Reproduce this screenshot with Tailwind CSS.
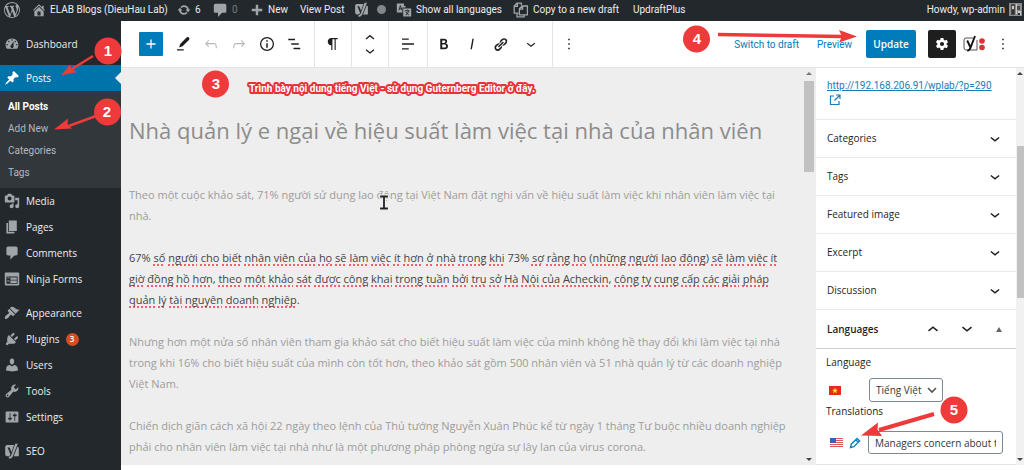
<!DOCTYPE html>
<html lang="vi">
<head>
<meta charset="utf-8">
<meta name="viewport" content="width=device-width, initial-scale=1">
<title>Edit Post</title>
<script src="https://cdn.jsdelivr.net/npm/@tailwindcss/browser@4"></script>
</head>
<body class="relative flex h-screen flex-col overflow-hidden bg-white font-['Open_Sans','Noto_Sans',sans-serif] text-[10px] text-[#1e1e1e]">

<!-- Admin bar -->
<header class="flex h-[21px] shrink-0 items-center bg-[#23282d] pr-0.5 pb-0.5 pl-1 font-[Roboto,sans-serif] text-[10px] leading-4 whitespace-nowrap text-[#eee]">
  <a href="#" aria-label="WordPress" class="w-7 text-[#a0a5aa]"><svg class="size-4" viewBox="0 0 20 20" fill="currentColor"><path d="M20 10c0-5.51-4.49-10-10-10C4.48 0 0 4.49 0 10c0 5.52 4.48 10 10 10 5.51 0 10-4.48 10-10zM7.78 15.37L4.37 6.22c.55-.02 1.17-.08 1.17-.08.5-.06.44-1.13-.06-1.11 0 0-1.45.11-2.37.11-.18 0-.37 0-.58-.01C4.12 2.69 6.87 1.11 10 1.11c2.33 0 4.45.87 6.05 2.34-.68-.11-1.65.39-1.65 1.58 0 .74.45 1.36.9 2.1.35.61.55 1.36.55 2.46 0 1.49-1.4 5-1.4 5l-3.03-8.37c.54-.02.82-.17.82-.17.5-.05.44-1.25-.06-1.22 0 0-1.44.12-2.38.12-.87 0-2.33-.12-2.33-.12-.5-.03-.56 1.2-.06 1.22l.92.08 1.26 3.41zM17.41 10c.24-.64.74-1.87.43-4.25.7 1.29 1.05 2.71 1.05 4.25 0 3.29-1.73 6.24-4.4 7.78.97-2.59 1.94-5.2 2.92-7.78zM6.1 18.09C3.12 16.65 1.11 13.53 1.11 10c0-1.3.23-2.48.72-3.59C3.25 10.3 4.67 14.2 6.1 18.09zm4.03-6.63l2.58 6.98c-.86.29-1.76.45-2.71.45-.79 0-1.57-.11-2.29-.33.81-2.38 1.62-4.74 2.42-7.1z"/></svg></a>
  <a href="#" class="flex w-[145px] items-center gap-1"><svg class="size-[14px] text-[#a0a5aa]" viewBox="1 1 18 18" fill="currentColor"><path d="M16 8.5l1.53 1.53-1.06 1.06L10 4.6l-6.47 6.49-1.06-1.06L10 2.5l4 4v-2h2v4zm-6-2.46l6 5.99V18H4v-5.97zM12 17v-5H8v5h4z"/></svg>ELAB Blogs (DieuHau Lab)</a>
  <a href="#" class="flex w-9 items-center gap-1"><svg class="size-[14px] text-[#a0a5aa]" viewBox="0 0 20 20" fill="currentColor"><path d="M10.2 3.28c3.53 0 6.43 2.61 6.92 6h2.08l-3.5 4-3.5-4h2.32c-.45-1.97-2.21-3.45-4.32-3.45-1.45 0-2.73.71-3.54 1.78L4.95 5.66C6.23 4.2 8.11 3.28 10.2 3.28zm-.4 13.44c-3.52 0-6.43-2.61-6.92-6H.8l3.5-4c1.17 1.33 2.33 2.67 3.5 4H5.48c.45 1.97 2.21 3.45 4.32 3.45 1.45 0 2.73-.71 3.54-1.78l1.71 1.95c-1.28 1.46-3.15 2.38-5.25 2.38z"/></svg>6</a>
  <a href="#" class="flex w-[37px] items-center gap-1 text-[#777b80]"><svg class="size-[15px] text-[#a0a5aa]" viewBox="1 0 18 18" fill="currentColor"><path d="M4 2h11c1.100 0 2 .9 2 2v7c0 1.100-.9 2-2 2h-3l-5 5v-5H4c-1.100 0-2-.9-2-2V4c0-1.100.9-2 2-2z"/></svg>0</a>
  <a href="#" class="flex w-[50px] items-center gap-1"><svg class="size-[14px] text-[#a0a5aa]" viewBox="2 2 16 16" fill="currentColor"><path d="M16 8.600v2.800h-4.600V16H8.600v-4.600H4V8.600h4.600V4h2.800v4.600z"/></svg>New</a>
  <a href="#" class="w-[54px]">View Post</a>
  <a href="#" aria-label="Yoast SEO" class="flex w-[42px] items-center gap-2 text-[#a0a5aa]"><svg class="size-[15px]" viewBox="0 0 20 20" fill="currentColor"><path d="M4 2.500h8.600L9.300 11.500 7 5.500H4.500l3.600 8.800c-.5 1.400-1.400 2.200-3 2.300H4A2.500 2.500 0 0 1 1.500 14V5A2.500 2.500 0 0 1 4 2.500z"/><path d="M14 1h3.200L11 16.500c-1 2.400-2.600 3-5 3v-2.300c1.700 0 2.500-.6 3-1.800z"/><path d="M16.800 4.800c1 .3 1.700 1 1.700 2.200v9.600h-6.400z"/></svg><span class="size-[9px] rounded-full bg-[#82878c]"></span></a>
  <a href="#" class="flex w-[117px] items-center gap-1"><svg class="size-4 text-[#a0a5aa]" viewBox="0 0 20 20"><path fill="currentColor" d="M1 2h9v3h2v2H8v6H1zM9 8h10v10H9z"/><path fill="none" stroke="#23282d" stroke-width="1.200" d="M3.500 10.500l2-6 2 6M4.200 8.500h2.600M11 11h6M14 9.500V11M12 16c2.500-1 3.500-3 3.500-5M12.500 12.500c1 2 2 3 3.500 3.500"/></svg>Show all languages</a>
  <a href="#" class="flex w-[120px] items-center gap-1"><svg class="size-4 text-[#a0a5aa]" viewBox="0 0 20 20" fill="none" stroke="currentColor" stroke-width="1.600"><path d="M7 14H1.500V5L5 1.500h5.500V4M5.500 1.500v4h-4"/><path d="M8 8.500L11.500 5H18v11H8zM12 5v4H8" fill="#23282d"/><path d="M5 14v4.500h9V16"/></svg>Copy to a new draft</a>
  <a href="#">UpdraftPlus</a>
  <a href="#" class="ml-auto flex items-center gap-1">Howdy, wp-admin<svg class="size-[13px]" viewBox="0 0 13 13"><path fill="#8b8b8b" d="M0 0h13v13H0z"/><path fill="#4a4a4a" d="M2 1h4v11H2zM8 3h3v4H8z"/><path fill="#c9c9c9" d="M3 3h2v3H3zM9 8h3v4H9zM7 1h1v10H7z"/><path fill="#2f2f2f" d="M9 10h2v2H9zM3 7h2v4H3z"/></svg></a>
</header>

<div class="flex min-h-0 flex-1">

  <!-- Admin menu -->
  <nav class="flex w-[121px] shrink-0 flex-col bg-[#23282d] pt-2.5 text-[10px] leading-[26px] text-[#eee] [&_svg]:size-4 [&_svg]:text-[#a0a5aa]">
    <a href="#" class="flex h-[26px] items-center gap-1.5 pl-1"><svg viewBox="0 0 20 20" fill="currentColor"><path d="M3.760 16h12.480c1.100-1.370 1.760-3.110 1.760-5 0-4.420-3.580-8-8-8s-8 3.580-8 8c0 1.890.66 3.630 1.760 5zM10 4c.55 0 1 .45 1 1s-.45 1-1 1-1-.45-1-1 .45-1 1-1zM6 6c.55 0 1 .45 1 1s-.45 1-1 1-1-.45-1-1 .45-1 1-1zm8 0c.55 0 1 .45 1 1s-.45 1-1 1-1-.45-1-1 .45-1 1-1zm-5.370 5.550L12 7v6c0 1.100-.9 2-2 2s-2-.9-2-2c0-.57.24-1.080.63-1.450zM4 10c.55 0 1 .45 1 1s-.45 1-1 1-1-.45-1-1 .45-1 1-1zm12 0c.55 0 1 .45 1 1s-.45 1-1 1-1-.45-1-1 .45-1 1-1z"/></svg>Dashboard</a>
    <a href="#" class="mt-2 flex h-[26px] items-center gap-1.5 bg-[#0073aa] pl-1 text-white [&_svg]:text-white!"><svg viewBox="0 0 20 20" fill="currentColor"><path d="M10.440 3.020l1.820-1.820 6.360 6.350-1.830 1.820c-1.050-.68-2.480-.57-3.410.36l-.75.75c-.92.93-1.040 2.350-.35 3.410l-1.830 1.820-2.410-2.410-2.800 2.790c-.42.42-3.380 2.710-3.800 2.290s1.860-3.390 2.280-3.810l2.790-2.790L4.100 9.360l1.830-1.820c1.050.69 2.480.57 3.400-.36l.75-.75c.93-.92 1.050-2.350.36-3.410z"/></svg>Posts<span class="ml-auto border-y-6 border-r-6 border-y-transparent border-r-[#eee]"></span></a>
    <div class="flex flex-col bg-[#32373c] pt-[5px] pb-1 pl-2 font-[Roboto,sans-serif] text-[10px] leading-[22px] text-[#b4b9be]">
      <a href="#" class="font-bold text-white">All Posts</a>
      <a href="#">Add New</a>
      <a href="#">Categories</a>
      <a href="#">Tags</a>
    </div>
    <a href="#" class="flex h-[26px] items-center gap-1.5 pl-1"><svg viewBox="0 0 20 20" fill="currentColor"><path d="M13 11V4c0-.55-.45-1-1-1h-1.670L9 1H5L3.670 3H2c-.55 0-1 .45-1 1v7c0 .55.45 1 1 1h10c.55 0 1-.45 1-1zM7 4.500c1.380 0 2.500 1.120 2.500 2.500S8.380 9.500 7 9.500 4.500 8.380 4.500 7 5.620 4.500 7 4.500zM14 6h5v10.500c0 1.380-1.120 2.500-2.500 2.500S14 17.880 14 16.500s1.120-2.500 2.500-2.500c.17 0 .34.02.5.05V9h-3V6zm-4 8.050V13h2v3.500c0 1.380-1.120 2.500-2.500 2.500S7 17.880 7 16.500 8.120 14 9.500 14c.17 0 .34.02.5.05z"/></svg>Media</a>
    <a href="#" class="flex h-[26px] items-center gap-1.5 pl-1"><svg viewBox="0 0 20 20" fill="currentColor"><path d="M6 15V2h10v13H6zm-1 1h8v2H3V5h2v11z"/></svg>Pages</a>
    <a href="#" class="flex h-[26px] items-center gap-1.5 pl-1"><svg viewBox="0 0 20 20" fill="currentColor"><path d="M5 2h10c1.100 0 2 .9 2 2v7c0 1.100-.9 2-2 2h-2l-5 5v-5H5c-1.100 0-2-.9-2-2V4c0-1.100.9-2 2-2z"/></svg>Comments</a>
    <a href="#" class="flex h-[26px] items-center gap-1.5 pl-1"><svg viewBox="0 0 20 20" fill="currentColor"><path d="M2 2h16c.55 0 1 .45 1 1v14c0 .55-.45 1-1 1H2c-.55 0-1-.45-1-1V3c0-.55.45-1 1-1zm15 14V7H3v9h14zM4 8v1h3V8H4zm4 0v3h8V8H8zm-4 4v1h3v-1H4zm4 0v3h8v-3H8z"/></svg>Ninja Forms</a>
    <a href="#" class="mt-2 flex h-[26px] items-center gap-1.5 pl-1"><svg viewBox="0 0 20 20" fill="currentColor"><path d="M14.480 11.060L7.410 3.990l1.500-1.500c.5-.56 2.300-.47 3.510.32 1.210.8 1.430 1.280 2.910 2.100 1.180.64 2.450 1.260 4.450.85zm-.71.71L6.700 4.700 4.930 6.470c-.39.39-.39 1.020 0 1.410l1.060 1.060c.39.39.39 1.030 0 1.420-.6.6-1.430 1.110-2.210 1.690-.35.26-.7.53-1.010.84C1.430 14.230.4 16.080 1.400 17.070c.99 1 2.840-.03 4.180-1.360.31-.31.58-.66.85-1.020.57-.78 1.080-1.610 1.690-2.210.39-.39 1.020-.39 1.410 0l1.060 1.060c.39.39 1.020.39 1.410 0z"/></svg>Appearance</a>
    <a href="#" class="flex h-[26px] items-center gap-1.5 pl-1"><svg viewBox="0 0 20 20" fill="currentColor"><path d="M13.110 4.360L9.870 7.600 8 5.730l3.240-3.240c.35-.34 1.050-.2 1.560.32.52.51.66 1.210.31 1.550zm-8 1.770l.91-1.120 9.010 9.010-1.190.84c-.71.71-2.630 1.160-3.820 1.160H6.140L4.900 17.260c-.59.59-1.540.59-2.120 0-.59-.58-.59-1.530 0-2.120l1.240-1.240v-3.880c0-1.130.4-3.190 1.090-3.890zm7.260 3.970l3.240-3.240c.34-.35 1.040-.21 1.550.31.52.51.66 1.210.31 1.550l-3.240 3.250z"/></svg>Plugins<span class="flex size-[13px] items-center justify-center rounded-full bg-[#d54e21] text-[8px] font-semibold text-white">3</span></a>
    <a href="#" class="flex h-[26px] items-center gap-1.5 pl-1"><svg viewBox="0 0 20 20" fill="currentColor"><path d="M10 9.250c-2.270 0-2.730-3.440-2.730-3.440C7 4.020 7.820 2 9.970 2c2.160 0 2.980 2.020 2.710 3.810 0 0-.41 3.440-2.680 3.440zm0 2.570L12.720 10c2.390 0 4.520 2.330 4.520 4.530v2.490s-3.650 1.130-7.240 1.130c-3.650 0-7.240-1.130-7.240-1.130v-2.490c0-2.250 1.940-4.480 4.470-4.480z"/></svg>Users</a>
    <a href="#" class="flex h-[26px] items-center gap-1.5 pl-1"><svg viewBox="0 0 20 20" fill="currentColor"><path d="M16.680 9.770c-1.340 1.340-3.300 1.670-4.950.99l-5.410 6.520c-.99.99-2.590.99-3.580 0s-.99-2.590 0-3.570l6.520-5.420c-.68-1.650-.35-3.610.99-4.950 1.280-1.280 3.120-1.620 4.720-1.060l-2.890 2.890 2.820 2.820 2.860-2.870c.53 1.580.18 3.390-1.080 4.650zM3.810 16.210c.4.39 1.040.39 1.430 0 .4-.4.4-1.040 0-1.430-.39-.4-1.030-.4-1.430 0-.39.39-.39 1.030 0 1.430z"/></svg>Tools</a>
    <a href="#" class="flex h-[26px] items-center gap-1.5 pl-1"><svg viewBox="0 0 20 20" fill="currentColor"><path d="M18 16V4c0-.55-.45-1-1-1H3c-.55 0-1 .45-1 1v12c0 .55.45 1 1 1h14c.55 0 1-.45 1-1zM8 11h1c.55 0 1 .45 1 1s-.45 1-1 1H8v1.500c0 .28-.22.5-.5.5s-.5-.22-.5-.5V13H6c-.55 0-1-.45-1-1s.45-1 1-1h1V5.500c0-.28.22-.5.5-.5s.5.22.5.5V11zm5-2h-1c-.55 0-1-.45-1-1s.45-1 1-1h1V5.500c0-.28.22-.5.5-.5s.5.22.5.5V7h1c.55 0 1 .45 1 1s-.45 1-1 1h-1v5.500c0 .28-.22.5-.5.5s-.5-.22-.5-.5V9z"/></svg>Settings</a>
    <a href="#" class="mt-2 flex h-[26px] items-center gap-1.5 pl-1"><svg viewBox="0 0 20 20" fill="currentColor"><path d="M4 2.500h8.600L9.300 11.500 7 5.500H4.500l3.600 8.800c-.5 1.400-1.400 2.200-3 2.300H4A2.500 2.500 0 0 1 1.500 14V5A2.500 2.500 0 0 1 4 2.500z"/><path d="M14 1h3.200L11 16.500c-1 2.400-2.600 3-5 3v-2.300c1.700 0 2.500-.6 3-1.800z"/><path d="M16.800 4.800c1 .3 1.700 1 1.700 2.200v9.600h-6.400z"/></svg>SEO</a>
  </nav>

  <div class="flex min-w-0 flex-1 flex-col pb-[5px]">

    <!-- Editor toolbar -->
    <div class="flex h-[47px] shrink-0 items-stretch border-b border-[#e2e4e7] bg-white pr-3 pl-[18px] [&_button]:flex [&_button]:items-center [&_button]:justify-center">
      <div class="flex items-center border-r border-[#e2e4e7] pr-[5px]">
        <button aria-label="Add block" class="mr-1.5 size-6 rounded-[1px] bg-[#007cba] text-white"><svg class="size-[18px]" viewBox="0 0 18 18" stroke="currentColor" stroke-width="1.300"><path d="M9 4.500v9M4.500 9h9"/></svg></button>
        <button aria-label="Tools" class="size-7"><svg class="size-[18px]" viewBox="0 0 24 24"><path fill="currentColor" d="M19.800 3.200c-1-1-2.300-.8-3.100 0L8.300 12l-1.500 4.800 4.600-1.700 8.500-8.600c.9-1 .9-2.400-.1-3.300zM4 19h9v1.800H4z"/></svg></button>
        <button aria-label="Undo" class="size-7 text-[#b8b8b8]"><svg class="size-[18px]" viewBox="0 0 24 24"><path fill="currentColor" d="M18.300 11.700c-.6-.6-1.400-.9-2.300-.9H6.700l2.900-3.300-1.100-1-4.500 5L8.500 16l1-1-2.700-2.700H16c.5 0 .9.2 1.300.5 1 1 1 3.400 1 4.500v.3h1.500v-.2c0-1.500 0-4.300-1.500-5.700z"/></svg></button>
        <button aria-label="Redo" class="size-7 text-[#b8b8b8]"><svg class="size-[18px]" viewBox="0 0 24 24"><path fill="currentColor" d="M15.600 6.500l-1.100 1 2.900 3.300H8c-.9 0-1.700.3-2.300.9-1.400 1.500-1.400 4.200-1.400 5.600v.2h1.500v-.3c0-1.100 0-3.500 1-4.500.3-.3.7-.5 1.200-.5h9.300L14.500 15l1 1 4.600-4.500z"/></svg></button>
        <button aria-label="Details" class="size-7"><svg class="size-[18px]" viewBox="0 0 24 24"><circle cx="12" cy="12" r="8.500" fill="none" stroke="currentColor" stroke-width="1.700"/><path fill="currentColor" d="M11 11h2v6h-2zM11 7h2v2h-2z"/></svg></button>
        <button aria-label="Outline" class="size-7"><svg class="size-[18px]" viewBox="0 0 24 24" stroke="currentColor" stroke-width="1.700"><path d="M3 6h9M7 12h10M10 18h9"/></svg></button>
      </div>
      <div class="flex items-center border-r border-[#e2e4e7] px-1">
        <button aria-label="Paragraph" class="size-7"><svg class="size-[18px]" viewBox="0 0 24 24"><path fill="currentColor" d="M18.300 4H9.900v-.1l-.9.200c-2.300.4-4 2.400-4 4.800s1.700 4.400 4 4.800l.7.1V20h1.500V5.500h2.900V20h1.500V5.500h2.700V4z"/></svg></button>
      </div>
      <div class="flex flex-col items-center justify-center border-r border-[#e2e4e7] px-[9px]">
        <button aria-label="Move up"><svg class="h-[13px] w-[18px]" viewBox="0 3 24 18" fill="none" stroke="currentColor" stroke-width="1.800"><path d="M6.500 14L12 9.500l5.500 4.500"/></svg></button>
        <button aria-label="Move down"><svg class="h-[13px] w-[18px]" viewBox="0 3 24 18" fill="none" stroke="currentColor" stroke-width="1.800"><path d="M6.500 11l5.500 4.500 5.500-4.500"/></svg></button>
      </div>
      <div class="flex items-center border-r border-[#e2e4e7] px-[5px]">
        <button aria-label="Align" class="size-7"><svg class="size-[18px]" viewBox="0 0 24 24" stroke="currentColor" stroke-width="1.700"><path d="M4 5.500h9M4 12h16M4 18.500h9"/></svg></button>
      </div>
      <div class="flex items-center border-r border-[#e2e4e7] pr-1 pl-0.5">
        <button aria-label="Bold" class="size-7"><svg class="size-[18px]" viewBox="0 0 24 24"><path fill="currentColor" d="M14.700 11.300c1-.6 1.500-1.600 1.500-3 0-2.300-1.300-3.400-4-3.400H7v14h5.800c1.400 0 2.500-.3 3.300-1 .8-.7 1.200-1.700 1.200-2.900.1-1.900-.8-3.100-2.600-3.700zm-5.100-4h2.300c.6 0 1.100.1 1.400.4.3.3.5.7.5 1.200s-.2 1-.5 1.200c-.3.3-.8.4-1.400.4H9.600V7.300zm4.600 9c-.4.3-1 .4-1.700.4H9.600v-3.900h2.900c.7 0 1.300.2 1.700.5.4.3.6.8.6 1.500s-.2 1.200-.6 1.500z"/></svg></button>
        <button aria-label="Italic" class="size-7"><svg class="size-[18px]" viewBox="0 0 24 24"><path fill="currentColor" d="M12.500 5L10 19h1.900l2.500-14z"/></svg></button>
        <button aria-label="Link" class="size-7"><svg class="size-[15px]" viewBox="0 0 20 20"><path fill="currentColor" d="M17.740 2.760c1.680 1.690 1.680 4.410 0 6.100l-1.530 1.520c-1.120 1.120-2.700 1.470-4.140 1.090l2.620-2.610.76-.77.76-.76c.84-.84.84-2.200 0-3.040-.84-.85-2.200-.85-3.040 0l-.77.76-3.380 3.380c-.37-1.440-.02-3.020 1.100-4.140l1.520-1.530c1.690-1.680 4.420-1.680 6.100 0zM8.590 13.430l5.340-5.340c.42-.42.42-1.100 0-1.520-.44-.43-1.130-.39-1.530 0l-5.330 5.340c-.42.42-.42 1.100 0 1.520.44.43 1.130.39 1.520 0zm-.76 2.290l4.140-4.150c.38 1.440.03 3.020-1.090 4.140l-1.520 1.530c-1.690 1.680-4.410 1.680-6.100 0-1.680-1.680-1.680-4.420 0-6.100l1.530-1.520c1.120-1.120 2.700-1.470 4.140-1.100l-4.140 4.150c-.85.84-.85 2.200 0 3.050.84.84 2.200.84 3.040 0z"/></svg></button>
        <button aria-label="More formatting" class="h-7 w-[34px]"><svg class="size-[18px]" viewBox="0 0 24 24"><path fill="currentColor" d="M17.500 11.600L12 16l-5.500-4.400.9-1.200L12 14l4.500-3.600 1 1.200z"/></svg></button>
      </div>
      <div class="flex items-center px-0.5">
        <button aria-label="Block options" class="size-7"><svg class="size-[18px]" viewBox="0 0 24 24" fill="currentColor"><path d="M11 5h2v2h-2zM11 11h2v2h-2zM11 17h2v2h-2z"/></svg></button>
      </div>
      <div class="ml-auto flex items-center">
        <button class="mr-[18px] font-[Roboto,sans-serif] text-[10px] text-[#007cba]">Switch to draft</button>
        <button class="mr-3.5 font-[Roboto,sans-serif] text-[10px] text-[#007cba]">Preview</button>
        <button class="mr-3 h-7 w-[50px] rounded-[2px] bg-[#007cba] text-[10px] font-semibold text-white">Update</button>
        <button aria-label="Settings" class="mr-1.5 size-7 rounded-[2px] bg-[#1e1e1e] text-white"><svg class="size-[14px]" viewBox="0 0 20 20"><path fill="currentColor" fill-rule="evenodd" d="M8 1.500h4l.5 2.600 1.600.9 2.500-.9 2 3.400-2 1.700v1.700l2 1.700-2 3.400-2.500-.9-1.600.9-.5 2.600H8l-.5-2.600-1.600-.9-2.500.9-2-3.400 2-1.700V9.200l-2-1.700 2-3.400 2.500.9 1.600-.9zM10 7a3 3 0 1 0 0 6 3 3 0 0 0 0-6z"/></svg></button>
        <button aria-label="Yoast SEO" class="h-7 w-6"><svg class="h-[18px] w-6" viewBox="0 0 24 18"><path fill="#fff" stroke="#555" d="M11 3H4a2 2 0 0 0-2 2v8a2 2 0 0 0 2 2h11V5"/><path fill="none" stroke="#111" stroke-width="1.900" d="M5.200 5.500L8.300 12M13 1L8.800 12c-.8 2.600-1.600 3.500-3.500 3.700"/><circle cx="20" cy="6" r="2.800" fill="#dc3232"/><circle cx="20" cy="12.500" r="2.800" fill="#dc3232"/></svg></button>
        <button aria-label="Options" class="ml-0.5 h-7 w-6"><svg class="ml-1.5 size-[18px]" viewBox="0 0 24 24" fill="currentColor"><path d="M11 5h2v2h-2zM11 11h2v2h-2zM11 17h2v2h-2z"/></svg></button>
      </div>
    </div>

    <div class="flex min-h-0 flex-1">

      <!-- Post content -->
      <main class="min-w-0 flex-1 overflow-hidden bg-[#eee] pt-11 pl-2 whitespace-nowrap">
        <h1 class="text-[22px] leading-9 text-[#8c8c8c]">Nhà quản lý e ngại về hiệu suất làm việc tại nhà của nhân viên</h1>
        <div class="mt-9 flex flex-col gap-[21px] text-[11px] leading-[21px] text-[#9c9c9c]">
          <p>Theo một cuộc khảo sát, 71% người sử dụng lao động tại Việt Nam đặt nghi vấn về hiệu suất làm việc khi nhân viên làm việc tại<br>nhà.</p>
          <p class="text-[#444] [&_u]:decoration-[#f0606a] [&_u]:decoration-dotted [&_u]:decoration-2 [&_u]:underline-offset-2 [&_u]:[text-decoration-skip-ink:none]">67% <u>số</u> <u>người</u> <u>cho</u> <u>biết</u> <u>nhân</u> <u>viên</u> <u>của</u> <u>họ</u> <u>sẽ</u> <u>làm</u> <u>việc</u> <u>ít</u> <u>hơn</u> <u>ở</u> <u>nhà</u> <u>trong</u> <u>khi</u> 73% <u>sợ</u> <u>rằng</u> <u>họ</u> (<u>những</u> <u>người</u> <u>lao</u> <u>động</u>) <u>sẽ</u> <u>làm</u> <u>việc</u> <u>ít</u><br><u>giờ</u> <u>đồng</u> <u>hồ</u> <u>hơn</u>, <u>theo</u> <u>một</u> <u>khảo</u> <u>sát</u> <u>được</u> <u>công</u> <u>khai</u> <u>trong</u> <u>tuần</u> <u>bởi</u> <u>trụ</u> <u>sở</u> <u>Hà</u> <u>Nội</u> <u>của</u> <u>Acheckin</u>, <u>công</u> <u>ty</u> <u>cung</u> <u>cấp</u> <u>các</u> <u>giải</u> <u>pháp</u><br><u>quản</u> <u>lý</u> <u>tài</u> <u>nguyên</u> <u>doanh</u> <u>nghiệp</u>.</p>
          <p>Nhưng hơn một nửa số nhân viên tham gia khảo sát cho biết hiệu suất làm việc của mình không hề thay đổi khi làm việc tại nhà<br>trong khi 16% cho biết hiệu suất của mình còn tốt hơn, theo khảo sát gồm 500 nhân viên và 51 nhà quản lý từ các doanh nghiệp<br>Việt Nam.</p>
          <p>Chiến dịch giãn cách xã hội 22 ngày theo lệnh của Thủ tướng Nguyễn Xuân Phúc kể từ ngày 1 tháng Tư buộc nhiều doanh nghiệp<br>phải cho nhân viên làm việc tại nhà như là một phương pháp phòng ngừa sự lây lan của virus corona.</p>
        </div>
      </main>
      <div class="flex w-[14px] shrink-0 flex-col items-center bg-[#eee] py-1">
        <span class="border-x-3 border-b-3 border-x-transparent border-b-[#777]"></span>
        <span class="mt-1.5 h-[91px] w-2.5 bg-[#c1c1c1]"></span>
        <span class="mt-auto border-x-3 border-t-3 border-x-transparent border-t-[#444]"></span>
      </div>

      <!-- Document settings -->
      <aside class="flex w-[200px] shrink-0 flex-col border-b border-[#e2e4e7] bg-white text-[10px] font-medium [&_section>button]:flex [&_section>button]:h-[38px] [&_section>button]:w-full [&_section>button]:items-center [&_section>button]:justify-between [&_section>button]:border-b [&_section>button]:border-[#e8eaec] [&_section>button]:pr-3 [&_section>button]:pl-[11px]">
        <div class="h-[52px] border-b border-[#e8eaec] pt-2.5 pl-[11px] font-normal">
          <a href="#" class="block font-[Roboto,sans-serif] text-[10px] leading-4 text-[#1a7cb8] underline">http://192.168.206.91/wplab/?p=290
            <svg class="ml-0.5 size-3" viewBox="0 0 12 12" fill="none" stroke="currentColor" stroke-width="1.200"><path d="M5 2H1.500v8.500H10V7M7 1h4v4M11 1L5.500 6.500"/></svg></a>
        </div>
        <section><button>Categories<svg class="size-[18px]" viewBox="0 0 24 24" fill="none" stroke="currentColor" stroke-width="2"><path d="M6.500 10l5.500 4.500 5.500-4.500"/></svg></button></section>
        <section><button>Tags<svg class="size-[18px]" viewBox="0 0 24 24" fill="none" stroke="currentColor" stroke-width="2"><path d="M6.500 10l5.500 4.500 5.500-4.500"/></svg></button></section>
        <section><button>Featured image<svg class="size-[18px]" viewBox="0 0 24 24" fill="none" stroke="currentColor" stroke-width="2"><path d="M6.500 10l5.500 4.500 5.500-4.500"/></svg></button></section>
        <section><button>Excerpt<svg class="size-[18px]" viewBox="0 0 24 24" fill="none" stroke="currentColor" stroke-width="2"><path d="M6.500 10l5.500 4.500 5.500-4.500"/></svg></button></section>
        <section><button>Discussion<svg class="size-[18px]" viewBox="0 0 24 24" fill="none" stroke="currentColor" stroke-width="2"><path d="M6.500 10l5.500 4.500 5.500-4.500"/></svg></button></section>
        <div class="flex h-[39px] items-center border-b border-[#ccd0d4] pr-2.5 pl-[11px] font-semibold">
          <h2 class="mr-auto">Languages</h2>
          <button aria-label="Move up" class="mr-4"><svg class="size-[18px]" viewBox="0 0 24 24" fill="none" stroke="currentColor" stroke-width="2"><path d="M6 14.500l6-5 6 5"/></svg></button>
          <button aria-label="Move down" class="mr-5"><svg class="size-[18px]" viewBox="0 0 24 24" fill="none" stroke="currentColor" stroke-width="2"><path d="M6 9.500l6 5 6-5"/></svg></button>
          <button aria-label="Toggle panel" class="mr-1 border-x-3 border-b-5 border-x-transparent border-b-[#666]"></button>
        </div>
        <div class="flex flex-col pt-[5px] pr-[13px] pl-2.5">
          <label for="lang" class="leading-4">Language</label>
          <div class="mt-2 flex h-6 items-center">
            <svg class="mr-7 ml-[3px] h-[9px] w-3" viewBox="0 0 12 9"><path fill="#e8291c" d="M0 0h12v9H0z"/><path fill="#ffe92c" d="M6 1.500l.8 2.200h2.200L7.200 5l.7 2.200L6 5.900 4.100 7.200 4.800 5 3 3.700h2.200z"/></svg>
            <div class="relative">
              <select id="lang" class="h-6 w-[74px] appearance-none rounded-[3px] border border-[#7e8993] bg-white pl-1.5 text-[10px] font-normal text-[#32373c]"><option>Tiếng Việt</option></select>
              <svg class="pointer-events-none absolute top-2 right-1.5 h-2 w-2.5" viewBox="0 0 10 8" fill="none" stroke="#555" stroke-width="1.600"><path d="M1 2l4 4 4-4"/></svg>
            </div>
          </div>
          <label for="trans" class="mt-px leading-4">Translations</label>
          <div class="mt-3 flex h-[23px] items-center">
            <svg class="mr-1.5 ml-1 h-[9px] w-[13px]" viewBox="0 0 13 9"><path fill="#fff" d="M0 0h13v9H0z"/><path stroke="#e0565b" d="M0 .5h13M0 2.500h13M0 4.500h13M0 6.500h13M0 8.500h13"/><path fill="#3f5fb0" d="M0 0h6v5H0z"/></svg>
            <a href="#" aria-label="Edit translation" class="mr-[7px]"><svg class="size-3" viewBox="0 0 12 12"><path fill="none" stroke="#0a7fc0" stroke-width="1.400" d="M1.500 10.500l.8-3.300 5.800-5.800 2.500 2.500-5.800 5.800zM6.700 2.800l2.500 2.500"/></svg></a>
            <input id="trans" type="text" value="Managers concern about the productivity" class="h-[23px] min-w-0 flex-1 rounded-[3px] border border-[#7e8993] bg-white px-1.5 text-[10px] font-normal text-[#32373c]">
          </div>
        </div>
      </aside>
      <div class="flex w-2 shrink-0 flex-col items-center bg-[#f1f1f1] py-1">
        <span class="border-x-3 border-b-3 border-x-transparent border-b-[#444]"></span>
        <span class="mt-[71px] h-[152px] w-[7px] bg-[#c1c1c1]"></span>
        <span class="mt-auto border-x-3 border-t-3 border-x-transparent border-t-[#444]"></span>
      </div>
    </div>
  </div>
</div>

<!-- Tutorial callouts drawn over the page -->
<svg class="pointer-events-none absolute top-0 left-0" width="1024" height="470" viewBox="0 0 1024 470">
  <g stroke="#ee3a3a" stroke-width="2.500" fill="#ee3a3a">
    <path d="M93 56L72 69"/><path stroke="none" d="M61 75.500l9-11 1.500 4.500 5.500 3z"/>
    <path d="M96 116L66 127"/><path stroke="none" d="M54 129.500l14-11-.5 6 4.500 4z"/>
    <path stroke-width="3.500" d="M718 34.500L842 36.500"/><path stroke="none" d="M857 36.500l-18 6 3-6-3-6.500z"/>
    <path stroke-width="4" d="M934 414L879 430"/><path stroke="none" d="M861 435.500l17-13-.5 7 4.500 6.500z"/>
  </g>
  <g fill="#ee3a3a"><circle cx="108" cy="51" r="13.500"/><circle cx="107.500" cy="112" r="13.500"/><circle cx="215.500" cy="84" r="13.500"/><circle cx="696.500" cy="39" r="13.500"/><circle cx="954" cy="410" r="13.500"/></g>
  <g fill="#fff" font-family="Liberation Sans, sans-serif" font-weight="700" font-size="15" text-anchor="middle">
    <text x="108" y="56">1</text><text x="107" y="117">2</text><text x="216" y="89">3</text><text x="697" y="44">4</text><text x="954" y="415">5</text>
  </g>
  <text x="249" y="92" font-family="Roboto, sans-serif" font-weight="700" font-size="10" fill="#fff" stroke="#e83038" stroke-width="4" stroke-linejoin="round" paint-order="stroke">Trình bày nội dung tiếng Việt - sử dụng Guternberg Editor ở đây.</text>
  <g fill="none" stroke-linecap="square"><path stroke="#eee" stroke-width="4" d="M381 196.500h6M384 197v11M381 208.500h6"/><path stroke="#222" stroke-width="1.800" d="M381 196.500h6M384 197v11M381 208.500h6"/></g>
</svg>
</body>
</html>
